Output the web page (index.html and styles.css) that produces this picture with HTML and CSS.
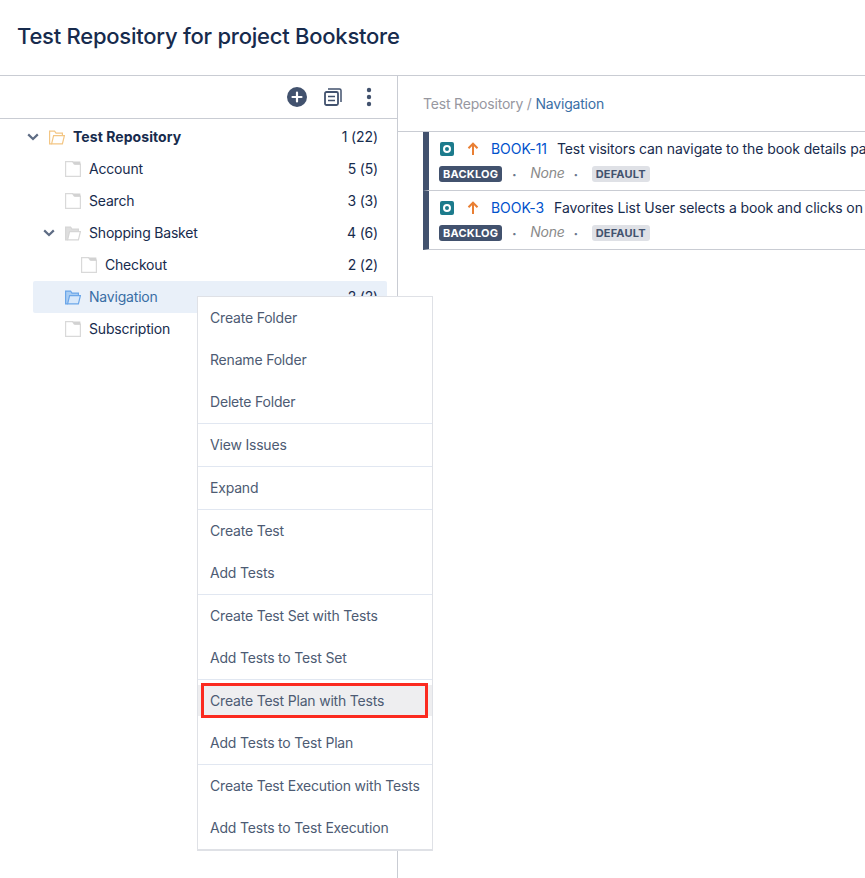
FILE: index.html
```html
<!DOCTYPE html>
<html lang="en">
<head>
    <meta charset="UTF-8">
    <meta name="viewport" content="width=device-width, initial-scale=1.0">
    <title>Test Repository for project Bookstore</title>
    <link rel="stylesheet" href="styles.css">
</head>
<body>
    <h1 class="page-title">Test Repository for project Bookstore</h1>
    <div class="layout">
        <div class="sidebar">
            <div class="toolbar">
                <svg class="tool-icon" width="20" height="20" viewBox="0 0 20 20">
                    <circle cx="10" cy="10" r="10" fill="#42526e"/>
                    <path d="M10 5.5v9M5.5 10h9" stroke="#fff" stroke-width="2.2" stroke-linecap="round"/>
                </svg>
                <svg class="tool-icon" width="18" height="18" viewBox="0 0 18 18" fill="none" stroke="#42526e">
                    <rect x="1" y="4" width="13" height="13" rx="1.5" stroke-width="1.8"/>
                    <path d="M4 1h11.500a1.500 1.500 0 0 1 1.500 1.500V14" stroke-width="1.500"/>
                    <path d="M4 8.500h7M4 12.500h7" stroke-width="1.700"/>
                </svg>
                <svg class="tool-icon" width="6" height="20" viewBox="0 0 6 20" fill="#42526e">
                    <circle cx="3" cy="3" r="2.200"/>
                    <circle cx="3" cy="10" r="2.200"/>
                    <circle cx="3" cy="17" r="2.200"/>
                </svg>
            </div>

            <ul class="tree">
                <li class="tree-row level-0 root">
                    <span class="chevron"><svg width="12" height="8" viewBox="0 0 12 8" fill="none" stroke="#5e6c84" stroke-width="2.200"><path d="M1.200 1.400 6 6l4.800-4.600"/></svg></span>
                    <svg class="folder" width="16" height="15" viewBox="0 0 16 15" fill="none" stroke="#f3c684" stroke-width="1.200"><path d="M2.600 13.900.6 13.900V1.100h5l1.400 2h6.400v2.600"/><path d="M2.600 13.900 4.600 5.700H15.400l-2 8.200z"/></svg>
                    <span class="tree-name">Test Repository</span>
                    <span class="tree-count">1 (22)</span>
                </li>
                <li class="tree-row level-1">
                    <span class="chevron"></span>
                    <svg class="folder" width="16" height="16" viewBox="0 0 16 16"><path d="M.6.6h7l1.500 2.400h6.300v12.400H.6z" fill="#fff" stroke="#d9d9d9" stroke-width="1.200"/><path d="M7.500.6h7.900v3.200H9.500z" fill="#d2d2d2"/></svg>
                    <span class="tree-name">Account</span>
                    <span class="tree-count">5 (5)</span>
                </li>
                <li class="tree-row level-1">
                    <span class="chevron"></span>
                    <svg class="folder" width="16" height="16" viewBox="0 0 16 16"><path d="M.6.6h7l1.500 2.400h6.300v12.400H.6z" fill="#fff" stroke="#d9d9d9" stroke-width="1.200"/><path d="M7.500.6h7.900v3.200H9.500z" fill="#d2d2d2"/></svg>
                    <span class="tree-name">Search</span>
                    <span class="tree-count">3 (3)</span>
                </li>
                <li class="tree-row level-1">
                    <span class="chevron"><svg width="12" height="8" viewBox="0 0 12 8" fill="none" stroke="#5e6c84" stroke-width="2.200"><path d="M1.200 1.400 6 6l4.800-4.600"/></svg></span>
                    <svg class="folder" width="16" height="15" viewBox="0 0 16 15" fill="none" stroke="#d6d6d6" stroke-width="1.200"><path d="M2.600 13.900.6 13.900V1.100h5l1.400 2h6.400v2.600" fill="#dedede"/><path d="M2.600 13.900 4.600 5.700H15.400l-2 8.200z" fill="#fff"/></svg>
                    <span class="tree-name">Shopping Basket</span>
                    <span class="tree-count">4 (6)</span>
                </li>
                <li class="tree-row level-2">
                    <span class="chevron"></span>
                    <svg class="folder" width="16" height="16" viewBox="0 0 16 16"><path d="M.6.6h7l1.500 2.400h6.300v12.400H.6z" fill="#fff" stroke="#d9d9d9" stroke-width="1.200"/><path d="M7.500.6h7.900v3.200H9.500z" fill="#d2d2d2"/></svg>
                    <span class="tree-name">Checkout</span>
                    <span class="tree-count">2 (2)</span>
                </li>
                <li class="tree-row level-1 selected">
                    <span class="chevron"></span>
                    <svg class="folder" width="16" height="15" viewBox="0 0 16 15" fill="none" stroke="#6ba6e9" stroke-width="1.200"><path d="M2.600 13.900.6 13.900V1.100h5l1.400 2h6.400v2.600" fill="#a9cdf3"/><path d="M2.600 13.900 4.600 5.700H15.400l-2 8.200z" fill="#d8e8fa"/></svg>
                    <span class="tree-name">Navigation</span>
                    <span class="tree-count">2 (2)</span>
                </li>
                <li class="tree-row level-1">
                    <span class="chevron"></span>
                    <svg class="folder" width="16" height="16" viewBox="0 0 16 16"><path d="M.6.6h7l1.500 2.400h6.300v12.400H.6z" fill="#fff" stroke="#d9d9d9" stroke-width="1.200"/><path d="M7.500.6h7.900v3.200H9.500z" fill="#d2d2d2"/></svg>
                    <span class="tree-name">Subscription</span>
                    <span class="tree-count">3 (3)</span>
                </li>
            </ul>
        </div>

        <div class="content">
            <div class="breadcrumb">Test Repository / <a class="crumb-link">Navigation</a></div>
            <div class="test-list">
                <div class="test-card">
                    <div class="test-line">
                        <svg class="type-icon" width="14" height="14" viewBox="0 0 14 14"><rect width="14" height="14" rx="2" fill="#1c7b8c"/><circle cx="7" cy="7" r="3" fill="none" stroke="#fff" stroke-width="2"/></svg>
                        <svg class="priority-icon" width="12" height="14" viewBox="0 0 12 14" fill="none" stroke="#e97f33" stroke-width="2"><path d="M6 13V2M1.500 6.200 6 1.700l4.500 4.500"/></svg>
                        <a class="issue-key">BOOK-11</a>
                        <span class="issue-title">Test visitors can navigate to the book details page</span>
                    </div>
                    <div class="test-meta">
                        <span class="lozenge dark">BACKLOG</span>
                        <span class="dot">·</span>
                        <span class="none-label">None</span>
                        <span class="dot">·</span>
                        <span class="lozenge light">DEFAULT</span>
                    </div>
                </div>
                <div class="test-card">
                    <div class="test-line">
                        <svg class="type-icon" width="14" height="14" viewBox="0 0 14 14"><rect width="14" height="14" rx="2" fill="#1c7b8c"/><circle cx="7" cy="7" r="3" fill="none" stroke="#fff" stroke-width="2"/></svg>
                        <svg class="priority-icon" width="12" height="14" viewBox="0 0 12 14" fill="none" stroke="#e97f33" stroke-width="2"><path d="M6 13V2M1.500 6.200 6 1.700l4.500 4.500"/></svg>
                        <a class="issue-key">BOOK-3</a>
                        <span class="issue-title">Favorites List User selects a book and clicks on the</span>
                    </div>
                    <div class="test-meta">
                        <span class="lozenge dark">BACKLOG</span>
                        <span class="dot">·</span>
                        <span class="none-label">None</span>
                        <span class="dot">·</span>
                        <span class="lozenge light">DEFAULT</span>
                    </div>
                </div>
            </div>
        </div>
    </div>

    <div class="context-menu">
        <ul class="menu-group">
            <li>Create Folder</li>
            <li>Rename Folder</li>
            <li>Delete Folder</li>
        </ul>
        <ul class="menu-group">
            <li>View Issues</li>
        </ul>
        <ul class="menu-group">
            <li>Expand</li>
        </ul>
        <ul class="menu-group">
            <li>Create Test</li>
            <li>Add Tests</li>
        </ul>
        <ul class="menu-group">
            <li>Create Test Set with Tests</li>
            <li>Add Tests to Test Set</li>
        </ul>
        <ul class="menu-group">
            <li class="marked">Create Test Plan with Tests</li>
            <li>Add Tests to Test Plan</li>
        </ul>
        <ul class="menu-group">
            <li>Create Test Execution with Tests</li>
            <li>Add Tests to Test Execution</li>
        </ul>
    </div>
</body>
</html>
```

FILE: styles.css
```css
html, body {
    height: 100%;
}
body {
    margin: 0;
    overflow: hidden;
    position: relative;
    font-family: Inter, "Liberation Sans", sans-serif;
    font-size: 14px;
    letter-spacing: -0.19px;
    color: #172b4d;
    background: #fff;
}
ul {
    list-style: none;
    margin: 0;
    padding: 0;
}
.page-title {
    margin: 0;
    height: 75px;
    padding-left: 17px;
    box-sizing: border-box;
    line-height: 73px;
    font-size: 22px;
    font-weight: 500;
    letter-spacing: -0.24px;
    color: #172b4d;
}
.layout {
    display: flex;
    height: calc(100% - 75px);
    border-top: 1px solid #c9ccd3;
    box-sizing: border-box;
}
.sidebar {
    width: 397px;
    flex: none;
    border-right: 1px solid #c9ccd3;
}
.toolbar {
    height: 42px;
    display: flex;
    align-items: center;
    justify-content: flex-end;
    border-bottom: 1px solid #c9ccd3;
    padding-right: 25px;
}
.tool-icon:nth-child(1) {
    margin-right: 17px;
}
.tool-icon:nth-child(2) {
    margin-right: 24px;
}
.tree {
    padding-top: 2px;
}
.tree-row {
    display: flex;
    align-items: center;
    height: 32px;
    margin-right: 10px;
    padding-right: 9px;
    border-radius: 2px;
}
.level-0 {
    margin-left: 17px;
}
.level-1 {
    margin-left: 33px;
}
.level-2 {
    margin-left: 49px;
}
.chevron {
    width: 32px;
    flex: none;
    padding-left: 10px;
    box-sizing: border-box;
    display: flex;
    align-items: center;
}
.folder {
    flex: none;
    width: 16px;
    margin-right: 8px;
}
.tree-name {
    flex: 1;
    padding-bottom: 1px;
}
.tree-count {
    padding-bottom: 1px;
}
.root .tree-name {
    font-weight: 700;
    letter-spacing: 0.07px;
}
.root .tree-count {
    letter-spacing: -0.1px;
}
.selected {
    background: #e9f0f9;
}
.selected .tree-name {
    color: #3a6ea5;
}
.content {
    flex: 1;
    min-width: 0;
}
.breadcrumb {
    height: 55px;
    padding-left: 25px;
    line-height: 55px;
    color: #97979f;
    border-bottom: 1px solid #c9ccd3;
}
.crumb-link {
    color: #3a6ea5;
}
.test-list {
    margin-left: 25px;
}
.test-card {
    height: 58px;
    border-left: 6px solid #42526e;
    border-bottom: 1px solid #c9ccd3;
    padding-left: 10px;
    white-space: nowrap;
    overflow: hidden;
}
.test-line {
    display: flex;
    align-items: center;
    height: 18px;
    padding-top: 8px;
    padding-left: 1px;
}
.type-icon {
    flex: none;
    margin-right: 13px;
}
.priority-icon {
    flex: none;
    margin-right: 12px;
}
.issue-key {
    color: #0052cc;
    letter-spacing: -0.05px;
    margin-right: 10px;
    padding-bottom: 1px;
}
.issue-title {
    padding-bottom: 1px;
    letter-spacing: -0.1px;
}
.test-meta {
    display: flex;
    align-items: center;
    height: 16px;
    margin-top: 8px;
}
.lozenge {
    display: inline-block;
    height: 16px;
    line-height: 16px;
    padding: 0 4px;
    border-radius: 3px;
    font-size: 11px;
    font-weight: 700;
    letter-spacing: 0.2px;
}
.lozenge.dark {
    background: #42526e;
    color: #fff;
}
.lozenge.light {
    background: #dfe1e6;
    color: #42526e;
}
.dot {
    width: 24px;
    margin-right: 4px;
    text-align: center;
    font-weight: 700;
    color: #6b778c;
}
.none-label {
    font-style: italic;
    color: #8a8a8a;
    padding-bottom: 3px;
}
.none-label + .dot {
    width: 22px;
    margin-right: 5px;
}
.context-menu {
    position: absolute;
    z-index: 1;
    left: 197px;
    top: 296px;
    width: 236px;
    box-sizing: border-box;
    background: #fff;
    border: 1px solid #dfe1e6;
    border-bottom-width: 2px;
    color: #4d5b73;
}
.menu-group + .menu-group {
    border-top: 1px solid #e1e7f1;
}
.menu-group li {
    position: relative;
    height: 42px;
    line-height: 42px;
    padding-left: 12px;
    white-space: nowrap;
}
.menu-group li.marked::before {
    content: "";
    position: absolute;
    left: 3px;
    right: 4px;
    top: 3px;
    height: 35px;
    box-sizing: border-box;
    border: 3px solid #fb2a1f;
    background: #eeeef0;
    z-index: -1;
}
.menu-group li.marked::after {
    content: "";
    position: absolute;
    left: 0;
    right: 0;
    top: 5px;
    height: 31px;
    background: #eeeef0;
    z-index: -2;
}
```
